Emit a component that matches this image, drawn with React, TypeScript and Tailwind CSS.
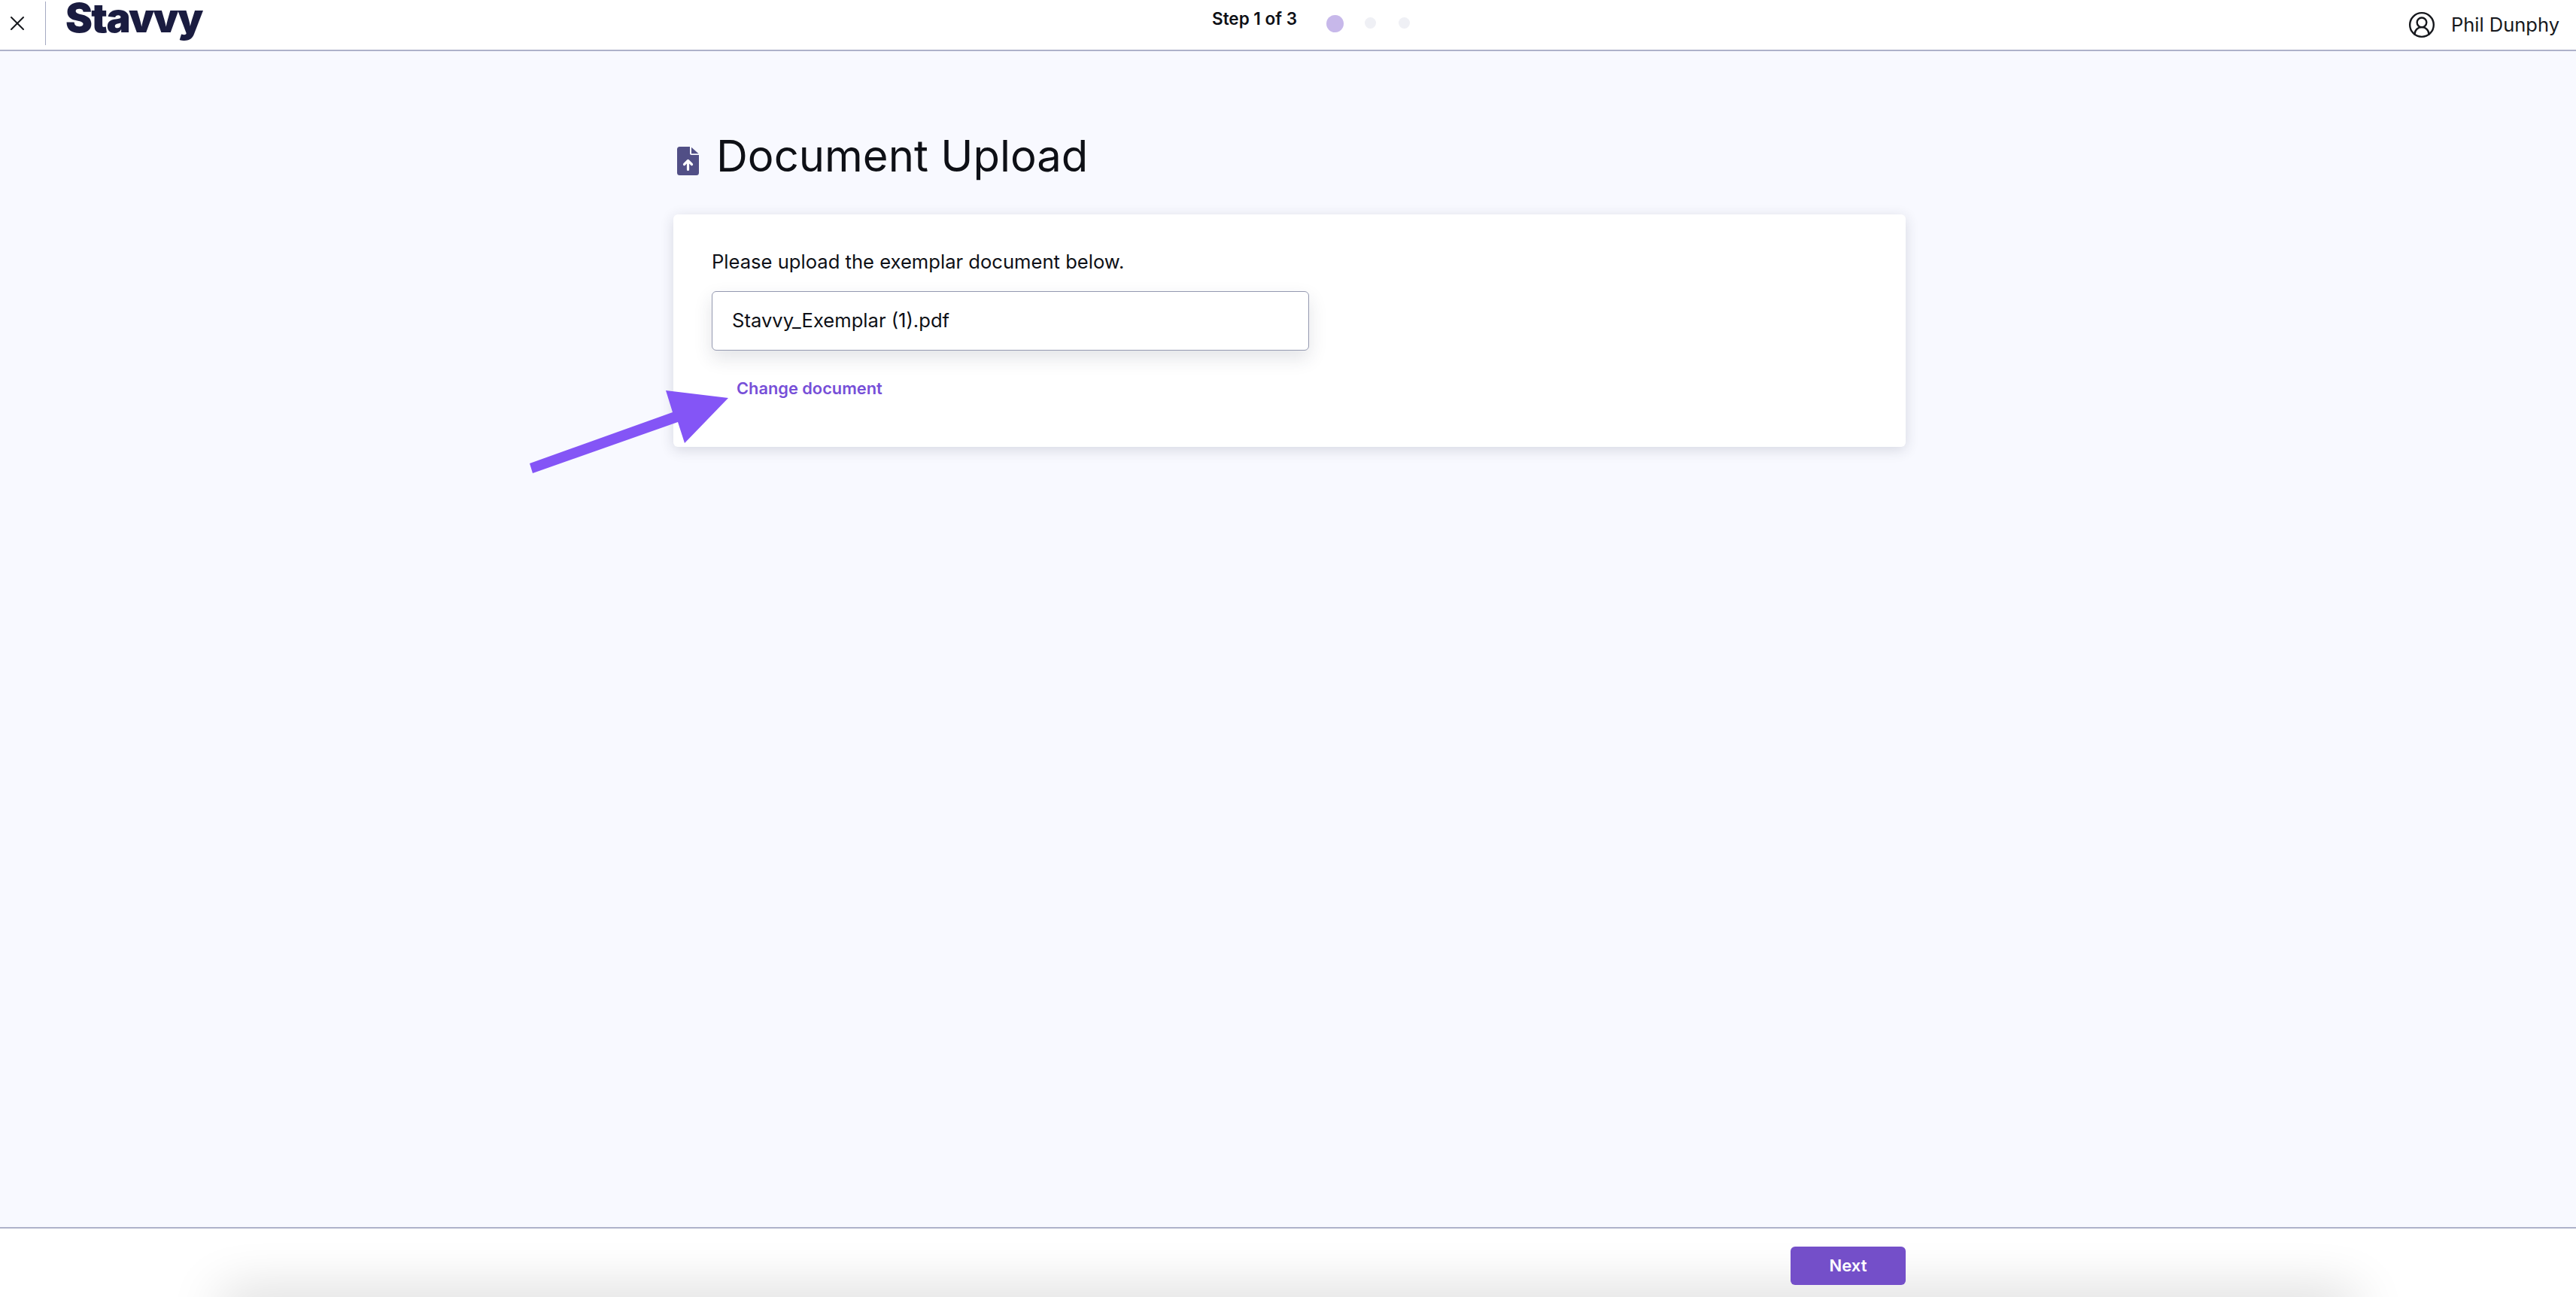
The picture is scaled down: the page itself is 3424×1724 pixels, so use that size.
import React from 'react';
import { X, CircleUserRound } from 'lucide-react';

const font = "font-['Inter','Noto_Sans',sans-serif]";

const FileUploadIcon = () => (
  <svg width="29" height="38" viewBox="0 0 29 38" className="mt-[24px] shrink-0">
    <path d="M3.500 0H17V9a2 2 0 0 0 2 2H29V34.500a3.500 3.500 0 0 1-3.500 3.500H3.500A3.500 3.500 0 0 1 0 34.500V3.500A3.500 3.500 0 0 1 3.500 0Z" fill="#514f86" />
    <path d="M19 0.800L28.500 9.200H19Z" fill="#514f86" />
    <path d="M14.500 30.500V18.500M9.500 23.500L14.500 18.500L19.500 23.500" fill="none" stroke="#fff" strokeWidth="3.200" strokeLinecap="round" strokeLinejoin="round" />
  </svg>
);

const Arrow = () => (
  <svg
    width="280"
    height="120"
    viewBox="700 515 280 120"
    className="absolute left-[700px] top-[515px] pointer-events-none"
  >
    <polygon points="704,616 894,548 885,519 968,529 910,589 901,561 708,629" fill="#8455f6" />
  </svg>
);

export default function App() {
  return (
    <div className={`relative flex h-[1724px] w-[3424px] flex-col overflow-hidden bg-[#f8f9ff] ${font} text-[#0e1016]`}>
      <header className="flex h-[68px] shrink-0 items-start border-b-2 border-[#aeb2ca] bg-white">
        <div className="flex h-[62px] items-center">
          <div className="flex w-[46px] justify-center">
            <X size={32} strokeWidth={1.5} className="text-[#16181d]" />
          </div>
          <div className="ml-[14px] h-[58px] w-[1px] bg-[#a5aac2]" />
        </div>
        <div className="ml-[26px] w-[184px] text-[54px] font-black leading-[47px] tracking-[-0.03em] text-[#1a1c40]">
          Stavvy
        </div>
        <div className="ml-[1340px] flex items-start">
          <span className="mt-[12px] w-[114px] text-[22.5px] font-semibold leading-[26px]">Step 1 of 3</span>
          <span className="ml-[38px] mt-[20px] h-[23px] w-[23px] rounded-full bg-[#c7b8ea]" />
          <span className="ml-[28px] mt-[23px] h-[15px] w-[15px] rounded-full bg-[#eff0f5]" />
          <span className="ml-[30px] mt-[23px] h-[15px] w-[15px] rounded-full bg-[#eff0f5]" />
        </div>
        <div className="ml-auto flex items-center gap-[20px] pr-[22px] pt-[14px]">
          <CircleUserRound size={38} strokeWidth={1.5} className="text-[#16181d]" />
          <span className="text-[25.5px] leading-[34px] text-[#16181d]">Phil Dunphy</span>
        </div>
      </header>

      <main className="flex-1 pl-[895px] pt-[103px]">
        <div className="flex items-start gap-[23px] pl-[5px]">
          <FileUploadIcon />
          <h1 className="text-[58px] font-normal leading-[72px]">Document Upload</h1>
        </div>
        <section className="mt-[42px] h-[309px] w-[1638px] rounded-[6px] bg-white pl-[51px] pt-[45px] shadow-[0_4px_18px_rgba(40,44,70,0.16)]">
          <p className="text-[25.6px] leading-[36px]">Please upload the exemplar document below.</p>
          <div className="mt-[21px] flex h-[79px] w-[794px] items-center rounded-[6px] border border-[#9499b0] bg-white pl-[26px] text-[25.6px] shadow-[0_10px_24px_rgba(40,44,70,0.13)]">
            Stavvy_Exemplar (1).pdf
          </div>
          <a className="mt-[34px] ml-[33px] block text-[21.8px] font-semibold leading-[32px] text-[#774fd8]">
            Change document
          </a>
        </section>
      </main>

      <footer className="relative h-[93px] shrink-0 overflow-hidden border-t-2 border-[#aeb2ca] bg-white">
        <div className="absolute left-[290px] top-[91px] h-[40px] w-[2844px] rounded-[40px] shadow-[0_-4px_70px_rgba(0,0,0,0.2)]" />
        <div className="relative flex justify-end pr-[891px] pt-[24px]">
          <button className="h-[51px] w-[153px] rounded-[6px] bg-[#744fc9] text-[22px] font-semibold text-white">
            Next
          </button>
        </div>
      </footer>

      <Arrow />
    </div>
  );
}
